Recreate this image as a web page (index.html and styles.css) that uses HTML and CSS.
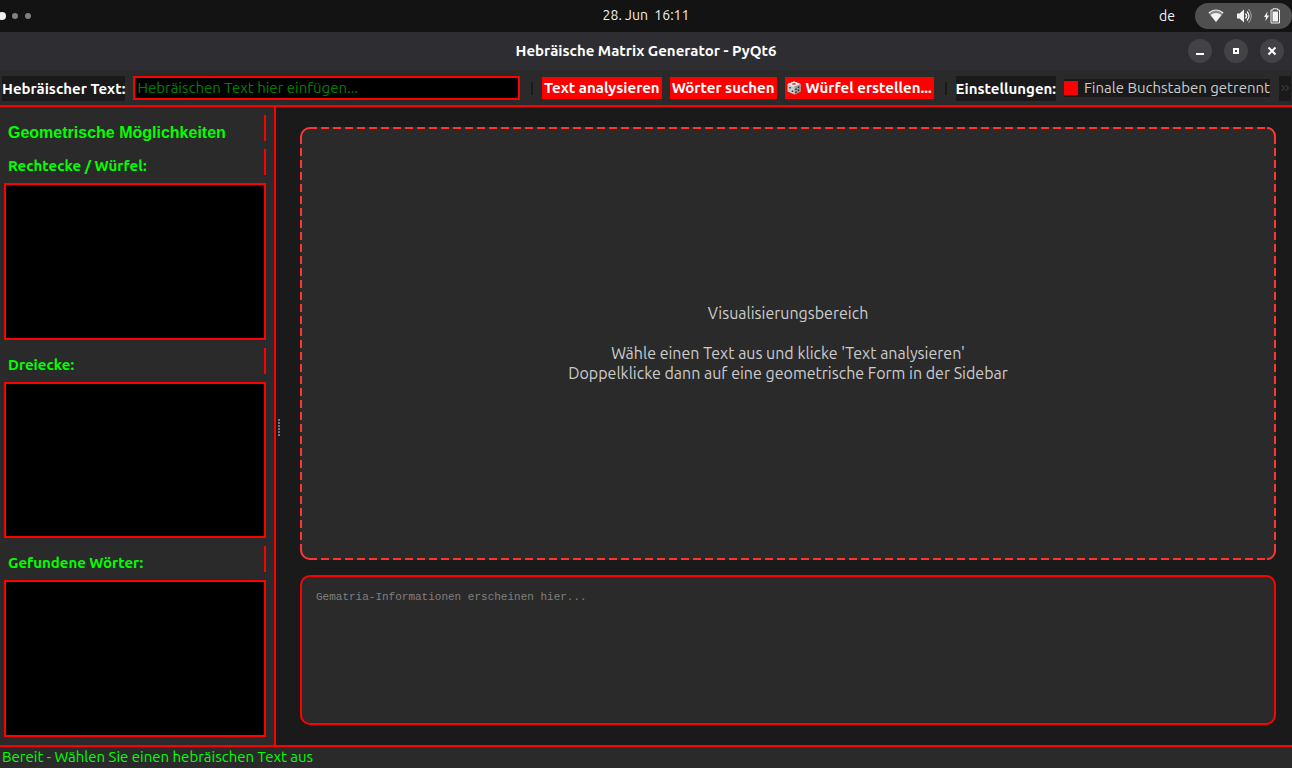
FILE: index.html
```html
<!DOCTYPE html>
<html lang="de">
<head>
<meta charset="utf-8">
<title>Hebräische Matrix Generator - PyQt6</title>
<link rel="stylesheet" href="styles.css">
</head>
<body>
<header class="topbar">
  <div class="workspaces"><span class="ws ws-active"></span><span class="ws"></span><span class="ws"></span></div>
  <time class="clock">28. Jun&nbsp; 16:11</time>
  <div class="tray">
    <span class="lang">de</span>
    <div class="status-pill">
      <svg width="16" height="16" viewBox="0 0 16 16"><path d="M.5 5Q8 -1 15.500 5L8 14Z" fill="#8a8a8a"/><path d="M.8 5Q8 -1 15.200 5" fill="none" stroke="#f2f2f2" stroke-width="1.200"/><path d="M2.500 7Q8 3 13.500 7L8 14Z" fill="#f2f2f2"/></svg>
      <svg width="16" height="16" viewBox="0 0 16 16" fill="none" stroke="#f2f2f2"><path d="M1 5.500h2.500L8 1.500v13L3.500 10.500H1Z" fill="#f2f2f2" stroke="none"/><path d="M9.500 5.500q2.200 2.500 0 5M11 3.500q4 4.500 0 9" stroke-width="1.300"/><path d="M12.500 1q5.500 7 0 14" stroke="#aaa"/></svg>
      <svg width="18" height="16" viewBox="0 0 18 16"><path d="M3.500 3.500L0 9h2L1.300 13 5.300 7.500H3Z" fill="#f2f2f2"/><path d="M9 .8h4.500v1.200h2v13h-8.500V2h2Z" fill="none" stroke="#f2f2f2"/><path d="M8.500 3.500h5.500v10H8.500Z" fill="#f2f2f2"/></svg>
    </div>
  </div>
</header>
<div class="titlebar">
  <h1 class="title">Hebräische Matrix Generator - PyQt6</h1>
  <div class="window-buttons">
    <button class="wbtn" aria-label="Minimieren"><svg width="12" height="12"><path d="M2 8h8v2H2z" fill="#fff"/></svg></button>
    <button class="wbtn" aria-label="Maximieren"><svg width="12" height="12"><path d="M4 4h4v4H4z" fill="none" stroke="#fff" stroke-width="2"/></svg></button>
    <button class="wbtn" aria-label="Schließen"><svg width="12" height="12"><path d="M2.500 2.500l7 7M9.500 2.500l-7 7" stroke="#fff" stroke-width="2"/></svg></button>
  </div>
</div>
<div class="toolbar">
  <label class="tool-label" for="text">Hebräischer Text:</label>
  <input class="text-input" id="text" type="text" placeholder="Hebräischen Text hier einfügen...">
  <span class="separator"></span>
  <button class="action">Text analysieren</button>
  <button class="action">Wörter suchen</button>
  <button class="action"><svg width="14" height="14" viewBox="0 0 14 14"><path d="M7 .5L13.500 3v7.500L7.500 13.500.5 10.500V3Z" fill="#ccc"/><path d="M7 .5L13.500 3 7.500 5.500.5 3Z" fill="#eee"/><path d="M7.500 5.500L13.500 3v7.500L7.500 13.500Z" fill="#999"/><ellipse cx="7" cy="3" rx="2" ry="1" fill="#e43"/><path d="M3 6v1.500M5.500 9.500V11M9 7.500V9M11.500 5.500V7M9 10.500V12M11.500 8.500V10" stroke="#333" stroke-width="1.500"/></svg><span>Würfel erstellen...</span></button>
  <span class="separator"></span>
  <span class="tool-label">Einstellungen:</span>
  <label class="check"><input class="check-box" type="checkbox" checked><span>Finale Buchstaben getrennt</span></label>
  <button class="overflow" aria-label="Mehr"><svg width="10" height="8" fill="none" stroke="#484848"><path d="M1.500 1l3 3-3 3M5.500 1l3 3-3 3"/></svg></button>
</div>
<div class="workspace">
  <aside class="sidebar">
    <h2 class="side-heading side-main">Geometrische Möglichkeiten</h2>
    <h3 class="side-heading">Rechtecke / Würfel:</h3>
    <div class="list"></div>
    <h3 class="side-heading">Dreiecke:</h3>
    <div class="list"></div>
    <h3 class="side-heading">Gefundene Wörter:</h3>
    <div class="list"></div>
  </aside>
  <div class="splitter"><span class="grip"></span></div>
  <main class="content">
    <section class="canvas">
      <svg class="corners">
        <path d="M17 1H10A9 9 0 0 0 1 10V17"/>
        <svg x="100%"><path d="M-9 1A8 8 0 0 1 -1 9V17"/></svg>
        <svg y="100%"><path d="M1 -16V-10A9 9 0 0 0 10 -1H17"/></svg>
        <svg x="100%" y="100%"><path d="M-1 -16V-9A8 8 0 0 1 -9 -1"/></svg>
      </svg>
      <p class="hint">Visualisierungsbereich<br><br>Wähle einen Text aus und klicke 'Text analysieren'<br>Doppelklicke dann auf eine geometrische Form in der Sidebar</p>
    </section>
    <textarea class="info" readonly aria-label="Gematria" placeholder="Gematria-Informationen erscheinen hier..."></textarea>
  </main>
</div>
<footer class="statusbar">Bereit - Wählen Sie einen hebräischen Text aus</footer>
</body>
</html>
```
FILE: styles.css
```css
* { box-sizing: border-box; }
body {
  margin: 0;
  height: 100vh;
  display: flex;
  flex-direction: column;
  overflow: hidden;
  background: #1a1a1a;
  color: #ccc;
  font: 15px/20px Ubuntu, "Noto Sans", sans-serif;
}
button, input { font: inherit; }
button { border: 0; padding: 0; }
svg { display: block; flex: none; }
.topbar, .titlebar {
  flex: none;
  display: grid;
  grid-template-columns: 1fr auto 1fr;
  align-items: center;
}
.topbar { height: 32px; background: #131313; color: #f2f2f2; font-size: 14px; }
.clock { padding-bottom: 2px; }
.workspaces { display: flex; align-items: center; gap: 7px; margin-left: -2px; }
.ws { width: 6px; height: 6px; border-radius: 3px; background: #808080; }
.ws-active { width: 8px; height: 8px; margin-right: -1px; border-radius: 4px; background: #f2f2f2; }
.tray { justify-self: end; display: flex; align-items: center; gap: 20px; }
.status-pill {
  display: flex;
  align-items: center;
  gap: 12px;
  height: 26px;
  padding: 0 10px 0 13px;
  border-radius: 13px;
  background: #4f4f4f;
}
.titlebar { height: 38px; background: #2e2d32; color: #fff; }
.title { grid-column: 2; margin: 0; font-size: 15px; line-height: 20px; font-weight: 700; }
.window-buttons { justify-self: end; display: flex; gap: 12px; padding-right: 8px; }
.wbtn {
  width: 24px;
  height: 24px;
  border-radius: 12px;
  background: #434246;
  display: grid;
  place-items: center;
}
.toolbar {
  flex: none;
  display: flex;
  align-items: center;
  gap: 8px;
  height: 37px;
  padding: 1px 1px 0 2px;
  background: #2a2a2a;
  border-bottom: 2px solid #f00;
  white-space: nowrap;
}
.tool-label { height: 25px; line-height: 25px; background: #1a1a1a; color: #fff; font-weight: 700; }
.text-input {
  flex: 1;
  min-width: 0;
  height: 24px;
  padding: 0 2px 2px;
  border: 2px solid #f00;
  background: #000;
  color: #0f0;
}
.text-input::placeholder { color: #008000; opacity: 1; }
.separator { width: 2px; height: 13px; margin: 0 1px 0 3px; background: #1a1a1a; }
.action {
  display: flex;
  align-items: center;
  gap: 5px;
  height: 22px;
  padding: 0 2px;
  background: #f00;
  color: #fff;
  font-weight: 700;
}
.check { display: flex; align-items: center; gap: 6px; height: 18px; background: #1a1a1a; }
.check-box { appearance: none; width: 14px; height: 14px; margin: 0; background: #f00; }
.overflow { width: 12px; height: 25px; margin-left: 1px; background: #1a1a1a; display: grid; place-items: center; }
.workspace { flex: 1; min-height: 0; display: flex; }
.sidebar {
  flex: none;
  width: 276px;
  display: flex;
  flex-direction: column;
  gap: 8px;
  padding: 8px 8px 8px 4px;
  background: #2a2a2a;
  border-right: 2px solid #f00;
}
.side-heading {
  margin: 0;
  height: 26px;
  padding: 4px 4px 0;
  border-right: 2px solid #f00;
  color: #0f0;
  font-size: 15px;
  line-height: 25px;
  font-weight: 700;
}
.side-main { font-family: "Liberation Sans", Arial, sans-serif; font-size: 16px; line-height: 27px; }
.list { flex: 1; border: 2px solid #f00; background: #000; }
.splitter { width: 6px; padding-top: 2px; display: flex; align-items: center; justify-content: center; }
.grip { width: 2px; height: 17px; background: repeating-linear-gradient(#777 0 2px, transparent 2px 3px); }
.content { flex: 1; display: flex; flex-direction: column; gap: 15px; padding: 20px 16px 20px 18px; }
.canvas {
  --dash-h: repeating-linear-gradient(to right, #f33 0 8px, transparent 8px 12px);
  --dash-v: repeating-linear-gradient(to bottom, #f33 0 8px, transparent 8px 12px);
  position: relative;
  flex: 1;
  display: grid;
  place-items: center;
  padding-bottom: 2px;
  border-radius: 10px;
  background:
    var(--dash-h) 9px 0 / calc(100% - 18px) 2px no-repeat,
    var(--dash-h) 9px 100% / calc(100% - 18px) 2px no-repeat,
    var(--dash-v) 0 9px / 2px calc(100% - 18px) no-repeat,
    var(--dash-v) 100% 9px / 2px calc(100% - 18px) no-repeat,
    #2a2a2a;
}
.corners {
  position: absolute;
  inset: 0;
  width: 100%;
  height: 100%;
  fill: none;
  stroke: #f33;
  stroke-width: 2px;
}
.corners svg { overflow: visible; }
.hint { margin: 0; font-size: 16px; line-height: 20px; text-align: center; }
.info {
  flex: none;
  height: 150px;
  padding: 14px;
  border: 2px solid #f00;
  border-radius: 10px;
  background: #2a2a2a;
  color: #ccc;
  font: 11px/13px "Liberation Mono", monospace;
  resize: none;
}
.info::placeholder { color: #808080; opacity: 1; }
.statusbar {
  flex: none;
  height: 23px;
  padding: 0 2px;
  border-top: 2px solid #f00;
  background: #2a2a2a;
  color: #0f0;
}
```
